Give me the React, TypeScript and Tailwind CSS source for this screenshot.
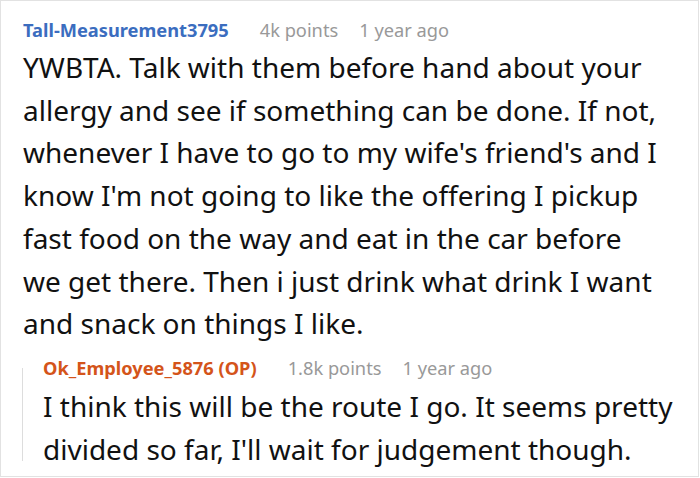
import React from 'react';

const Meta = ({ name, color, points }: { name: string; color: string; points: string }) => (
  <div className="flex items-baseline text-[18.25px] leading-[24px]">
    <span className={`font-bold ${color}`}>{name}</span>
    <span className="ml-[31px] text-[#999999]">{points}</span>
    <span className="ml-[21px] text-[#999999]">1 year ago</span>
  </div>
);

const Lines = ({ lines }: { lines: string[] }) => (
  <>
    {lines.map((l, i) => (
      <React.Fragment key={i}>
        {l}
        {i < lines.length - 1 && <br />}
      </React.Fragment>
    ))}
  </>
);

const comment = [
  'YWBTA. Talk with them before hand about your',
  'allergy and see if something can be done. If not,',
  "whenever I have to go to my wife's friend's and I",
  "know I'm not going to like the offering I pickup",
  'fast food on the way and eat in the car before',
  'we get there. Then i just drink what drink I want',
  'and snack on things I like.',
];

const reply = [
  'I think this will be the route I go. It seems pretty',
  "divided so far, I'll wait for judgement though.",
];

const App: React.FC = () => {
  return (
    <div className="w-[700px] h-[478px] bg-white" style={{ fontFamily: '"Noto Sans", sans-serif' }}>
      <div className="w-[699px] h-[477px] border border-[#e2e2e2] pl-[22px] pt-[17px] text-[#111111]">
        <Meta name="Tall-Measurement3795" color="text-[#3b6dbf]" points="4k points" />
        <p className="text-[28px] leading-[42.7px] mt-[4px] whitespace-nowrap">
          <Lines lines={comment} />
        </p>
        <div className="flex mt-[11px] -ml-px">
          <div className="w-px bg-[#dddddd] mt-[12px] mb-[9px]" />
          <div className="pl-[20px]">
            <Meta name="Ok_Employee_5876 (OP)" color="text-[#d4541a]" points="1.8k points" />
            <p className="text-[28px] leading-[42.7px] mt-[5px] whitespace-nowrap">
              <Lines lines={reply} />
            </p>
          </div>
        </div>
      </div>
    </div>
  );
};

export default App;
